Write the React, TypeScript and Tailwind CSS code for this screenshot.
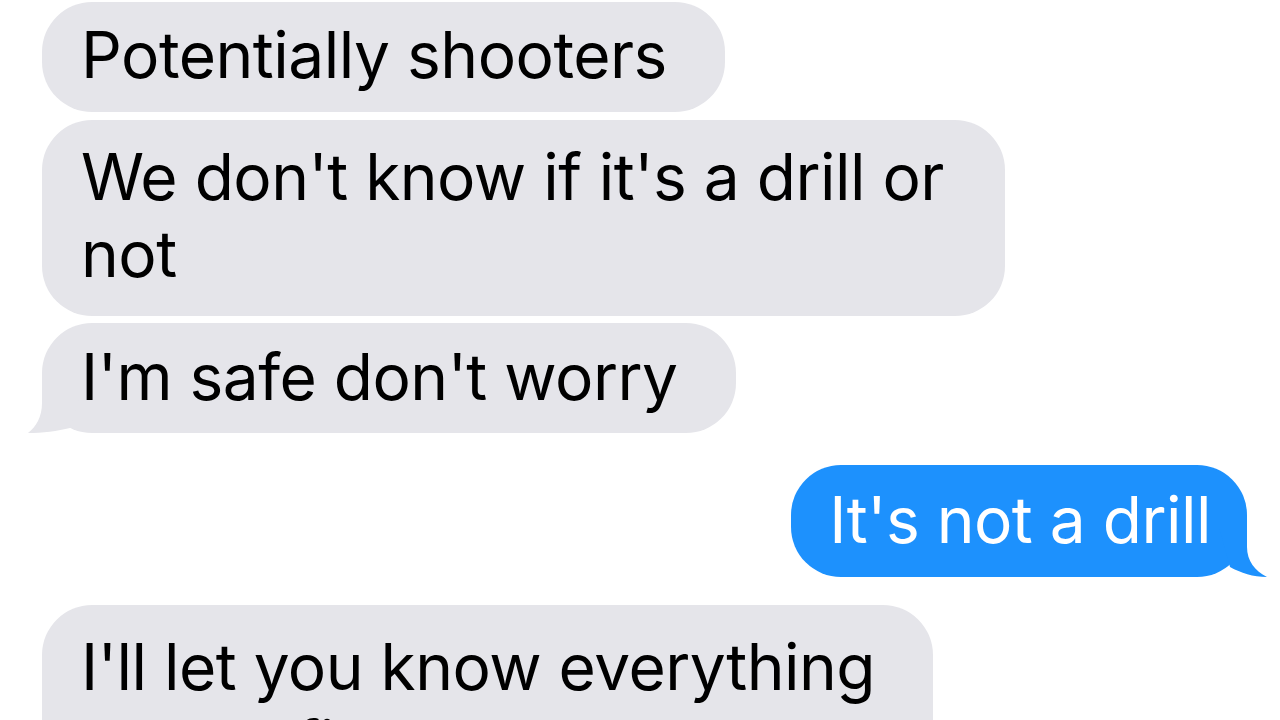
import React from 'react'
import clsx from 'clsx'

type BubbleProps = {
  me?: boolean
  tail?: boolean
  className?: string
  children: React.ReactNode
}

// iMessage style tail, drawn over the rounded bottom corner
const Tail: React.FC<{ me?: boolean }> = ({ me }) =>
  me ? (
    <svg className="absolute right-[-20px] bottom-0 w-[62px] h-[50px]" viewBox="0 0 62 50">
      <path d="M42 0 L42 20 C42 34 50 44 62 50 C48 50 36 46 25 40 L14 0 Z" fill="#1d91fd" />
    </svg>
  ) : (
    <svg className="absolute left-[-14px] bottom-0 w-[64px] h-[50px]" viewBox="0 0 64 50">
      <path d="M14 0 L14 20 C14 34 8 44 0 50 C14 50 30 48 42 45 L56 0 Z" fill="#e5e5ea" />
    </svg>
  )

const Bubble: React.FC<BubbleProps> = ({ me, tail, className, children }) => (
  <div
    className={clsx(
      'relative rounded-[50px] text-[64px] leading-[77px] tracking-[-0.5px]',
      me
        ? 'self-end bg-[#1d91fd] text-white pl-[38px] pr-[36px]'
        : 'self-start bg-[#e5e5ea] text-black pl-[39px] pr-[58px]',
      className
    )}
  >
    {tail && <Tail me={me} />}
    <span className="relative">{children}</span>
  </div>
)

export default function App() {
  return (
    <div className="w-[1280px] h-[720px] overflow-hidden bg-white pl-[42px] pr-[33px] pt-[2px] flex flex-col font-['Inter',sans-serif]">
      <Bubble className="pt-[14px] pb-[19px]">Potentially shooters</Bubble>
      <Bubble className="mt-[8px] pt-[18px] pb-[24px] max-w-[963px]">
        We don't know if it's a drill or not
      </Bubble>
      <Bubble tail className="mt-[7px] pt-[15px] pb-[18px]">
        I'm safe don't worry
      </Bubble>
      <Bubble me tail className="mt-[32px] pt-[16px] pb-[19px]">
        It's not a drill
      </Bubble>
      <Bubble className="mt-[28px] pt-[23px] pb-[24px] shrink-0">
        I'll let you know everything
        <br />
        when I find out
      </Bubble>
    </div>
  )
}
